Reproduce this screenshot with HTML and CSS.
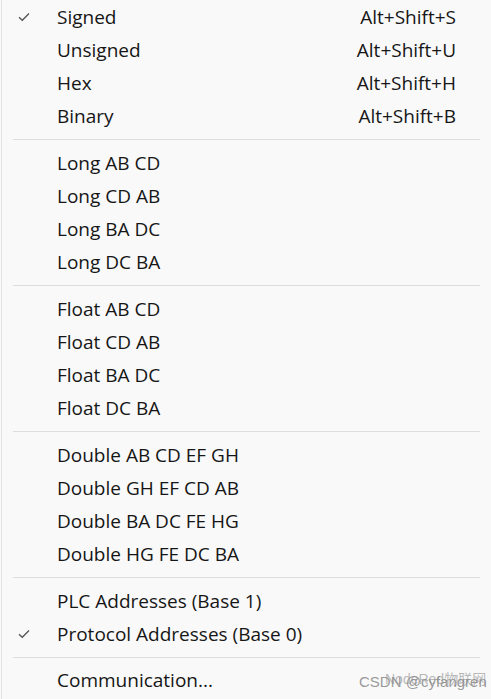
FILE: index.html
```html
<!DOCTYPE html>
<html lang="en">
<head>
    <meta charset="UTF-8">
    <title>Display menu</title>
    <link rel="stylesheet" href="styles.css">
</head>
<body>

<div class="menu">
    <div class="item checked">
        <span class="mark"><svg width="12" height="10" viewBox="0 0 12 10"><path d="M1 5.2 L4.3 8.3 L11 1.5" fill="none" stroke="#555" stroke-width="1.3"/></svg></span>
        <span class="label">Signed</span>
        <span class="key">Alt+Shift+S</span>
    </div>
    <div class="item"><span class="mark"></span><span class="label">Unsigned</span><span class="key">Alt+Shift+U</span></div>
    <div class="item"><span class="mark"></span><span class="label">Hex</span><span class="key">Alt+Shift+H</span></div>
    <div class="item"><span class="mark"></span><span class="label">Binary</span><span class="key">Alt+Shift+B</span></div>

    <div class="sep"></div>

    <div class="item"><span class="mark"></span><span class="label">Long AB CD</span></div>
    <div class="item"><span class="mark"></span><span class="label">Long CD AB</span></div>
    <div class="item"><span class="mark"></span><span class="label">Long BA DC</span></div>
    <div class="item"><span class="mark"></span><span class="label">Long DC BA</span></div>

    <div class="sep"></div>

    <div class="item"><span class="mark"></span><span class="label">Float AB CD</span></div>
    <div class="item"><span class="mark"></span><span class="label">Float CD AB</span></div>
    <div class="item"><span class="mark"></span><span class="label">Float BA DC</span></div>
    <div class="item"><span class="mark"></span><span class="label">Float DC BA</span></div>

    <div class="sep"></div>

    <div class="item"><span class="mark"></span><span class="label">Double AB CD EF GH</span></div>
    <div class="item"><span class="mark"></span><span class="label">Double GH EF CD AB</span></div>
    <div class="item"><span class="mark"></span><span class="label">Double BA DC FE HG</span></div>
    <div class="item"><span class="mark"></span><span class="label">Double HG FE DC BA</span></div>

    <div class="sep"></div>

    <div class="item"><span class="mark"></span><span class="label">PLC Addresses (Base 1)</span></div>
    <div class="item checked">
        <span class="mark"><svg width="12" height="10" viewBox="0 0 12 10"><path d="M1 5.2 L4.3 8.3 L11 1.5" fill="none" stroke="#555" stroke-width="1.3"/></svg></span>
        <span class="label">Protocol Addresses (Base 0)</span>
    </div>

    <div class="sep last"></div>

    <div class="item"><span class="mark"></span><span class="label">Communication...</span></div>

    <!-- watermark over the last row -->
    <div class="watermark">
        <span class="wm-a">CSDN @cyfangren</span>
        <span class="wm-b">NodeRed物联网</span>
    </div>
</div>

</body>
</html>
```

FILE: styles.css
```css
body {
    margin: 0;
    background: #f9f9f9;
    font-family: "Open Sans", "Noto Sans", "Noto Sans CJK SC", sans-serif;
    color: #161616;
}

.menu {
    position: relative;
    height: 699px;
    box-sizing: border-box;
    padding-top: 0;
    border-left: 1px solid #e3e3e3;
    margin-left: 1px;
}

.item {
    display: flex;
    align-items: center;
    height: 33px;
    font-size: 19px;
    padding-right: 35px;
}

.mark {
    width: 55px;
    flex-shrink: 0;
    display: flex;
    padding-left: 16px;
    box-sizing: border-box;
}

.label {
    flex: 1;
}

.key {
    text-align: right;
}

.sep {
    height: 1px;
    background: #dedede;
    margin: 7px 11px 6px 11px;
}

.sep.last {
    margin-bottom: 5px;
}

/* CSDN watermark */
.watermark {
    position: absolute;
    right: 14px;
    bottom: 6px;
    width: 118px;
    height: 22px;
    font-family: "Liberation Sans", "Noto Sans CJK SC", sans-serif;
    color: rgba(120, 120, 120, 0.75);
}

.wm-a {
    position: absolute;
    left: 0;
    top: 2px;
    font-size: 15px;
    white-space: nowrap;
}

.wm-b {
    position: absolute;
    left: 26px;
    top: -3px;
    font-size: 14px;
    white-space: nowrap;
    color: rgba(140, 140, 140, 0.6);
}
```
